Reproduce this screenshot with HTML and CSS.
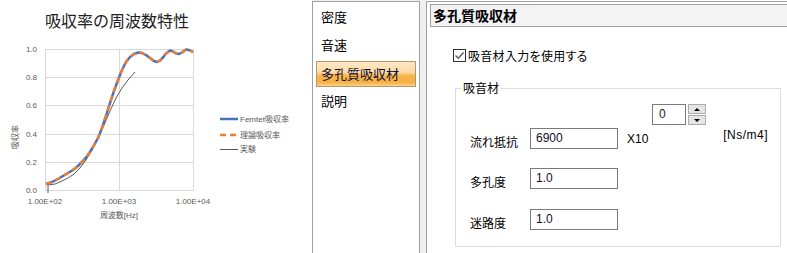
FILE: index.html
```html
<!DOCTYPE html>
<html lang="ja">
    <head>
        <meta charset="utf-8">
        <title>多孔質吸収材</title>
        <link rel="stylesheet" href="styles.css">
    </head>
    <body>
        <div class="chart">
            <svg width="312" height="253" viewBox="0 0 312 253">
                <text class="chart-title" x="45" y="27">吸収率の周波数特性</text>

                <!-- grid -->
                <g class="grid">
                    <line x1="46" y1="49.5" x2="193" y2="49.5"/>
                    <line x1="46" y1="77.5" x2="193" y2="77.5"/>
                    <line x1="46" y1="105.5" x2="193" y2="105.5"/>
                    <line x1="46" y1="134.5" x2="193" y2="134.5"/>
                    <line x1="46" y1="162.5" x2="193" y2="162.5"/>
                    <line x1="46" y1="190.5" x2="193" y2="190.5"/>
                    <line x1="45.5" y1="49" x2="45.5" y2="191"/>
                    <line x1="119.5" y1="49" x2="119.5" y2="191"/>
                    <line x1="193.5" y1="49" x2="193.5" y2="191"/>
                </g>

                <g class="tick">
                    <text x="37" y="52" text-anchor="end">1.0</text>
                    <text x="37" y="80" text-anchor="end">0.8</text>
                    <text x="37" y="108" text-anchor="end">0.6</text>
                    <text x="37" y="137" text-anchor="end">0.4</text>
                    <text x="37" y="165" text-anchor="end">0.2</text>
                    <text x="37" y="193" text-anchor="end">0.0</text>
                    <text x="45" y="204" text-anchor="middle">1.00E+02</text>
                    <text x="119" y="204" text-anchor="middle">1.00E+03</text>
                    <text x="193" y="204" text-anchor="middle">1.00E+04</text>
                    <text x="119" y="218" text-anchor="middle">周波数[Hz]</text>
                    <text x="0" y="0" text-anchor="middle" transform="translate(18 137) rotate(-90)">吸収率</text>
                </g>

                <!-- series -->
                <polyline class="s-exp" points="48,193 48,185 55,184 62,181 68,178 74,174 80,168 86,160 92,150 98,138 104,125 110,111 116,98 122,88 128,80 135,72"/>
                <polyline class="s-femtet" points="46,184 52,182 58,179 63,176 68,173 73,170 78,166 83,161 88,155 93,147 98,138 102,128 106,116 110,103 114,91 118,80 122,70 126,62 130,57 134,54 138,52.5 142,53 146,55 150,58 154,61 157,62 160,60.5 163,57.5 166,53.5 170,50.5 173,51.5 176,53.5 179,54 182,52.5 186,49.5 189,50 193,52"/>
                <polyline class="s-theory" points="46,184 52,182 58,179 63,176 68,173 73,170 78,166 83,161 88,155 93,147 98,138 102,128 106,116 110,103 114,91 118,80 122,70 126,62 130,57 134,54 138,52.5 142,53 146,55 150,58 154,61 157,62 160,60.5 163,57.5 166,53.5 170,50.5 173,51.5 176,53.5 179,54 182,52.5 186,49.5 189,50 193,52"/>

                <!-- legend -->
                <line class="s-femtet" x1="220" y1="119" x2="238" y2="119"/>
                <line class="s-theory" x1="220" y1="135" x2="238" y2="135"/>
                <line class="s-exp" x1="220" y1="149.5" x2="238" y2="149.5"/>
                <g class="tick">
                    <text x="240" y="122">Femtet吸収率</text>
                    <text x="240" y="138">理論吸収率</text>
                    <text x="240" y="152">実験</text>
                </g>
            </svg>
        </div>

        <div class="side">
            <ul class="nav">
                <li>密度</li>
                <li>音速</li>
                <li class="active">多孔質吸収材</li>
                <li>説明</li>
            </ul>
        </div>

        <div class="panel">
            <div class="panel-head">多孔質吸収材</div>

            <label class="check">
                <span class="check-box">
                    <svg width="11" height="11" viewBox="0 0 11 11"><path d="M1.5 5.5 L4.3 8.3 L9.5 2.5" fill="none" stroke="#5a5a5a" stroke-width="1.4"/></svg>
                </span>
                吸音材入力を使用する
            </label>

            <div class="group">
                <span class="group-title">吸音材</span>

                <div class="spin">
                    <span class="spin-text">0</span>
                    <span class="spin-btns">
                        <span class="spin-btn"><span class="tri-up"></span></span>
                        <span class="spin-btn"><span class="tri-down"></span></span>
                    </span>
                </div>

                <div class="field first">
                    <span class="lbl">流れ抵抗</span>
                    <span class="input">6900</span>
                    <span class="unit">X10</span>
                    <span class="unit-end">[Ns/m4]</span>
                </div>
                <div class="field second">
                    <span class="lbl">多孔度</span>
                    <span class="input">1.0</span>
                </div>
                <div class="field third">
                    <span class="lbl">迷路度</span>
                    <span class="input">1.0</span>
                </div>
            </div>
        </div>
    </body>
</html>
```

FILE: styles.css
```css
*
{
    box-sizing: border-box;
}

body
{
    margin: 0;
    width: 787px;
    height: 253px;
    display: flex;
    overflow: hidden;
    background-color: white;
    font-family: "Noto Sans CJK JP", sans-serif;
    color: black;
}

/* chart */

.chart
{
    width: 312px;
    flex: none;
}

.chart svg
{
    display: block;
}

.chart-title
{
    font-family: "Noto Sans CJK JP", sans-serif;
    font-size: 16px;
    fill: #222;
}

.grid line
{
    stroke: #d9d9d9;
    stroke-width: 1;
}

.tick text
{
    font-family: "Liberation Sans", "Noto Sans CJK JP", sans-serif;
    font-size: 8px;
    fill: #595959;
}

.s-femtet
{
    fill: none;
    stroke: #4472c4;
    stroke-width: 2.5;
    stroke-linejoin: round;
}

.s-theory
{
    fill: none;
    stroke: #ed7d31;
    stroke-width: 2.5;
    stroke-dasharray: 6 4;
    stroke-linejoin: round;
}

.s-exp
{
    fill: none;
    stroke: #595959;
    stroke-width: 1;
}

/* side list */

.side
{
    width: 114px;
    flex: none;
    background-color: #f0f0f0;
}

.nav
{
    list-style: none;
    margin: 1px 0 0 0;
    padding: 1px 0 0 0;
    width: 108px;
    height: 252px;
    background-color: white;
    border: 1px solid #a0a0a0;
    border-bottom: none;
    font-size: 13px;
}

.nav li
{
    height: 28px;
    line-height: 28px;
    padding-left: 8px;
}

.nav li.active
{
    height: 26px;
    line-height: 24px;
    margin: 2px 3px 0 3px;
    padding-left: 4px;
    border: 1px solid #b09a72;
    background: linear-gradient(#fde8c4 0%, #fcd9a2 45%, #f9b64c 55%, #f7b043 85%, #fbd38c 100%);
    color: #10103a;
}

/* right panel */

.panel
{
    flex: 1;
    margin-top: 1px;
    border-top: 1px solid #a0a0a0;
    border-left: 1px solid #a0a0a0;
    background-color: white;
    font-size: 12px;
    font-feature-settings: "palt";
}

.panel-head
{
    margin: 2px 0 0 3px;
    height: 23px;
    padding-left: 2px;
    border: 1px solid #a0a0a0;
    border-right: none;
    background-color: #f3f3f3;
    font-size: 14px;
    font-weight: bold;
    line-height: 20px;
}

.check
{
    display: flex;
    align-items: center;
    height: 14px;
    margin: 21px 0 0 26px;
    gap: 2px;
    letter-spacing: 0.3px;
}

.check-box
{
    width: 13px;
    height: 13px;
    border: 1px solid #333;
    display: flex;
    align-items: center;
    justify-content: center;
}

.check-box svg
{
    display: block;
}

.group
{
    position: relative;
    margin: 26px 0 0 28px;
    width: 326px;
    height: 159px;
    border: 1px solid #dcdcdc;
    padding-top: 15px;
}

.group-title
{
    position: absolute;
    top: -8px;
    left: 5px;
    padding: 0 2px;
    line-height: 14px;
    background-color: white;
}

.spin
{
    display: flex;
    margin-left: 196px;
    height: 21px;
}

.spin-text
{
    width: 34px;
    height: 21px;
    border: 1px solid #7a7a7a;
    padding-left: 6px;
    font-family: "Liberation Sans", sans-serif;
    font-size: 12px;
    line-height: 19px;
    color: #222;
}

.spin-btns
{
    display: flex;
    flex-direction: column;
    gap: 1px;
    margin-left: 2px;
}

.spin-btn
{
    width: 18px;
    height: 10px;
    border: 1px solid #adadad;
    background-color: #e5e5e5;
    display: flex;
    align-items: center;
    justify-content: center;
}

.tri-up
{
    border-left: 3px solid transparent;
    border-right: 3px solid transparent;
    border-bottom: 3px solid black;
}

.tri-down
{
    border-left: 3px solid transparent;
    border-right: 3px solid transparent;
    border-top: 3px solid black;
}

.field
{
    display: flex;
    align-items: center;
    height: 21px;
    padding-left: 14px;
}

.field.first
{
    margin-top: 3px;
}

.field.second
{
    margin-top: 19px;
}

.field.third
{
    margin-top: 20px;
}

.lbl
{
    width: 60px;
    padding-top: 5px;
}

.input
{
    width: 88px;
    height: 21px;
    border: 1px solid #7a7a7a;
    padding-left: 5px;
    font-family: "Liberation Sans", sans-serif;
    font-size: 12px;
    line-height: 18px;
    color: #1a0a2a;
}

.unit
{
    margin-left: 9px;
    font-family: "Liberation Sans", sans-serif;
    font-size: 12px;
}

.unit-end
{
    align-self: flex-start;
    margin-left: auto;
    margin-right: 12px;
    font-family: "Liberation Sans", sans-serif;
    font-size: 12px;
    line-height: 15px;
    letter-spacing: 0.5px;
}
```
